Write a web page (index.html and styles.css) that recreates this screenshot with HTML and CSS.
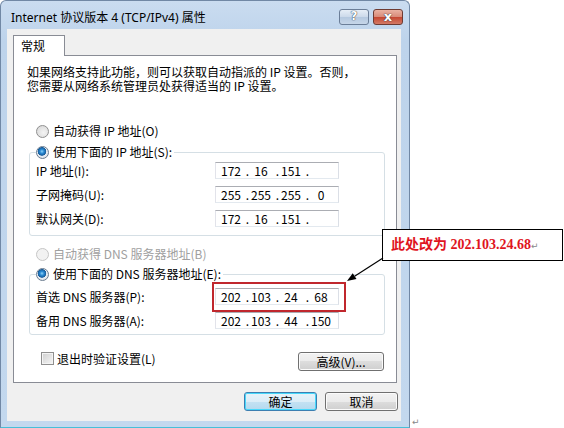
FILE: index.html
```html
<!DOCTYPE html>
<html lang="zh-CN">
<head>
    <meta charset="UTF-8">
    <title>Internet 协议版本 4 (TCP/IPv4) 属性</title>
    <link rel="stylesheet" href="styles.css">
</head>
<body>
    <div class="window">
        <div class="titlebar">
            <span class="title">Internet 协议版本 4 (TCP/IPv4) 属性</span>
            <span class="tbtn help">?</span>
            <span class="tbtn close">x</span>
        </div>
        <div class="client">
            <div class="tab">常规</div>
            <div class="panel">
                <p class="intro">如果网络支持此功能，则可以获取自动指派的 IP 设置。否则，<br>您需要从网络系统管理员处获得适当的 IP 设置。</p>

                <label class="opt first"><span class="radio"></span>自动获得 IP 地址(O)</label>
                <fieldset class="group">
                    <legend class="opt"><span class="radio on"></span>使用下面的 IP 地址(S):</legend>
                    <div class="row">
                        <span class="lbl">IP 地址(I):</span>
                        <div class="ipbox"><span class="f">172</span><span class="d">.</span><span class="f">16</span><span class="d">.</span><span class="f">151</span><span class="d">.</span><span class="f"></span></div>
                    </div>
                    <div class="row">
                        <span class="lbl">子网掩码(U):</span>
                        <div class="ipbox"><span class="f">255</span><span class="d">.</span><span class="f">255</span><span class="d">.</span><span class="f">255</span><span class="d">.</span><span class="f">0</span></div>
                    </div>
                    <div class="row">
                        <span class="lbl">默认网关(D):</span>
                        <div class="ipbox"><span class="f">172</span><span class="d">.</span><span class="f">16</span><span class="d">.</span><span class="f">151</span><span class="d">.</span><span class="f"></span></div>
                    </div>
                </fieldset>

                <label class="opt off"><span class="radio"></span>自动获得 DNS 服务器地址(B)</label>
                <fieldset class="group dns">
                    <legend class="opt"><span class="radio on"></span>使用下面的 DNS 服务器地址(E):</legend>
                    <div class="row">
                        <span class="lbl">首选 DNS 服务器(P):</span>
                        <div class="ipbox"><span class="f">202</span><span class="d">.</span><span class="f">103</span><span class="d">.</span><span class="f">24</span><span class="d">.</span><span class="f">68</span></div>
                    </div>
                    <div class="row">
                        <span class="lbl">备用 DNS 服务器(A):</span>
                        <div class="ipbox"><span class="f">202</span><span class="d">.</span><span class="f">103</span><span class="d">.</span><span class="f">44</span><span class="d">.</span><span class="f">150</span></div>
                    </div>
                </fieldset>

                <div class="bottomrow">
                    <label class="check"><span class="box"></span>退出时验证设置(L)</label>
                    <button class="btn adv">高级(V)...</button>
                </div>
            </div>
            <div class="footer">
                <button class="btn default">确定</button>
                <button class="btn">取消</button>
            </div>
        </div>
    </div>

    <!-- annotation over the screenshot -->
    <div class="highlight"></div>
    <div class="callout">此处改为 202.103.24.68<span class="pmark">↵</span></div>
    <svg class="arrow" width="50" height="40" viewBox="0 0 50 40">
        <line x1="43" y1="8" x2="14.6" y2="26.2" stroke="#000" stroke-width="1.2"/>
        <polygon points="7,31 16.5,29.1 12.7,23.2" fill="#000"/>
    </svg>
    <span class="endmark">↵</span>
</body>
</html>
```

FILE: styles.css
```css
body {
    margin: 0;
    width: 564px;
    height: 428px;
    position: relative;
    overflow: hidden;
    background: #fff;
    font-family: "Noto Sans CJK SC", sans-serif;
    font-size: 12px;
    color: #000;
}
.window {
    width: 410px;
    height: 428px;
    box-sizing: border-box;
    border: 1px solid #7188a5;
    border-bottom-color: #47bfd8;
    border-radius: 6px 6px 0 0;
    background: linear-gradient(#cadcf0, #bdd3eb 40px, #c3d8ee);
}
.titlebar {
    height: 28px;
    display: flex;
    align-items: flex-start;
    padding: 0 6px 0 10px;
}
.title {
    flex: 1;
    margin-top: 9px;
    line-height: 16px;
    font-family: "Noto Sans", "Noto Sans CJK SC", sans-serif;
    font-size: 12px;
}
.tbtn {
    margin-top: 8px;
    width: 30px;
    height: 16px;
    box-sizing: border-box;
    border: 1px solid #6b7e98;
    border-radius: 3px;
    text-align: center;
    line-height: 13px;
    font-family: "DejaVu Sans", sans-serif;
    font-weight: bold;
    color: #fff;
    text-shadow: 0 0 1px #2b3440, 0 0 1px #2b3440;
}
.help {
    font-size: 12px;
    background: linear-gradient(#e6eef7, #cbd9ea 50%, #b4c8df 50%, #c6d6e9);
}
.close {
    margin-left: 4px;
    font-size: 13px;
    border-color: #6e3b33;
    background: linear-gradient(#eab2a2, #d88a78 50%, #c5452f 50%, #d37a66);
}
.client {
    margin: 0 8px 0 6px;
    height: 392px;
    box-sizing: border-box;
    padding: 6px 0 0 6px;
    background: #f0f0f0;
}
.tab {
    position: relative;
    z-index: 1;
    width: 52px;
    height: 21px;
    box-sizing: border-box;
    margin-bottom: -1px;
    padding-left: 7px;
    border: 1px solid #898c95;
    border-bottom: none;
    background: #fff;
    line-height: 20px;
}
.panel {
    width: 384px;
    box-sizing: border-box;
    border: 1px solid #898c95;
    background: #fff;
    padding-bottom: 11px;
}
.intro {
    margin: 9px 0 0 13px;
    line-height: 14px;
    white-space: nowrap;
}
.opt {
    display: flex;
    align-items: center;
    gap: 4px;
    height: 14px;
    line-height: 14px;
    margin-left: 22px;
}
.opt.first {
    margin-top: 31px;
}
.opt.off {
    margin-top: 11px;
    color: #a0a0a0;
}
.radio {
    width: 13px;
    height: 13px;
    box-sizing: border-box;
    border: 1px solid #8f8f8f;
    border-radius: 50%;
    background: radial-gradient(circle at 60% 60%, #f4f4f4, #d4d4d4);
    flex: none;
}
.radio.on {
    border-color: #6b7c8f;
    background: radial-gradient(circle at 45% 40%, #8fd3f7 0, #2a8ad4 2px, #175c9a 4px, #e9eef4 4.6px, #cfd6de);
}
.off .radio {
    border-color: #c6c6c6;
    background: #f2f2f2;
}
.group {
    margin: 7px 11px 0 15px;
    padding: 0 6px 8px;
    border: 1px solid #d5dfe5;
    border-radius: 3px;
}
.group.dns {
    margin-top: 6px;
    padding-bottom: 5px;
}
.group legend.opt {
    margin-left: 0;
    padding: 0 2px 0 0;
}
.row {
    display: flex;
    align-items: center;
    height: 17px;
    margin-top: 7px;
}
.group .row:first-of-type {
    margin-top: 3px;
}
.group.dns .row:first-of-type {
    margin-top: 7px;
}
.lbl {
    width: 179px;
    line-height: 14px;
}
.ipbox {
    display: flex;
    width: 124px;
    height: 17px;
    box-sizing: border-box;
    padding-left: 3px;
    border: 1px solid;
    border-color: #abadb3 #dbdfe6 #e3e9ef #e2e3ea;
    background: #fff;
    line-height: 15px;
}
.ipbox .f {
    width: 24px;
    text-align: center;
}
.ipbox .d {
    width: 6px;
    text-align: right;
}
.bottomrow {
    display: flex;
    justify-content: space-between;
    align-items: flex-start;
    margin: 17px 12px 0 27px;
}
.check {
    display: flex;
    align-items: center;
    gap: 3px;
    height: 13px;
    line-height: 13px;
}
.box {
    width: 13px;
    height: 13px;
    box-sizing: border-box;
    border: 1px solid #8f8f8f;
    background: linear-gradient(135deg, #cfcfcf, #f6f6f6);
    box-shadow: inset 0 0 0 1px #f4f4f4;
}
.btn {
    height: 19px;
    box-sizing: border-box;
    padding: 0;
    border: 1px solid #707070;
    border-radius: 3px;
    background: linear-gradient(#f2f2f2, #ebebeb 50%, #dddddd 50%, #cfcfcf);
    box-shadow: inset 0 0 0 1px #fbfbfb;
    font-family: "Noto Sans CJK SC", sans-serif;
    font-size: 12px;
    line-height: 16px;
    color: #000;
}
.adv {
    width: 86px;
}
.footer {
    display: flex;
    justify-content: flex-end;
    gap: 8px;
    margin: 9px 3px 0 0;
}
.footer .btn {
    width: 73px;
}
.btn.default {
    border-color: #3c7fb1;
    box-shadow: inset 0 0 0 1px #48d8fb;
    background: linear-gradient(#e8f3f9, #dcedf7 50%, #c4e2f3 50%, #b5d9ee);
}
.highlight {
    position: absolute;
    left: 212px;
    top: 282px;
    width: 134px;
    height: 30px;
    box-sizing: border-box;
    border: 2px solid #c0272d;
}
.callout {
    position: absolute;
    left: 382px;
    top: 229px;
    width: 181px;
    height: 32px;
    box-sizing: border-box;
    padding-left: 8px;
    border: 1px solid #000;
    background: #fff;
    font-family: "Liberation Serif", "Noto Sans CJK SC", serif;
    font-size: 14px;
    font-weight: bold;
    line-height: 30px;
    color: #e0141e;
}
.pmark {
    font-family: "DejaVu Sans", sans-serif;
    font-size: 9px;
    font-weight: normal;
    color: #888;
}
.arrow {
    position: absolute;
    left: 340px;
    top: 250px;
}
.endmark {
    position: absolute;
    left: 412px;
    top: 417px;
    font-family: "DejaVu Sans", sans-serif;
    font-size: 9px;
    color: #888;
}
```
